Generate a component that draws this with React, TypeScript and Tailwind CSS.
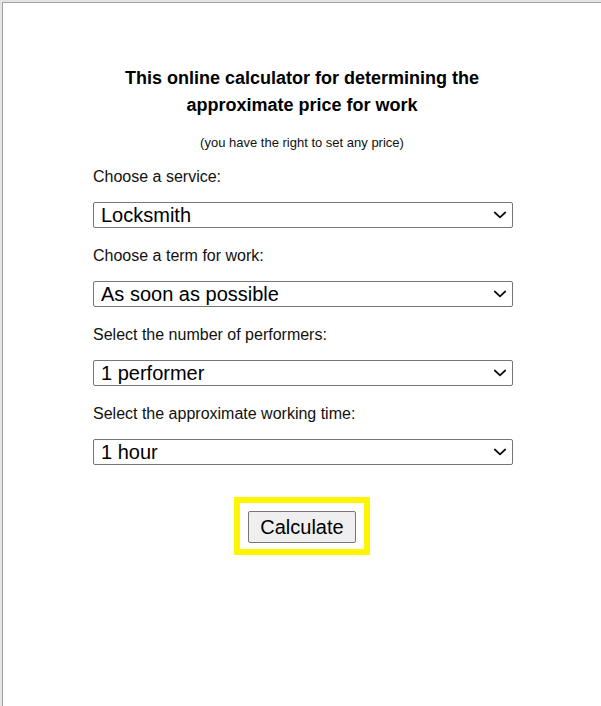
import { useState } from "react";

const fields = [
  {
    label: "Choose a service:",
    options: ["Locksmith", "Electrician", "Plumber", "Carpenter"],
  },
  {
    label: "Choose a term for work:",
    options: ["As soon as possible", "Within a day", "Within a week"],
  },
  {
    label: "Select the number of performers:",
    options: ["1 performer", "2 performers", "3 performers"],
  },
  {
    label: "Select the approximate working time:",
    options: ["1 hour", "2 hours", "4 hours", "8 hours"],
  },
];

const Chevron = () => (
  <svg
    className="pointer-events-none absolute right-[6px] top-1/2 -translate-y-1/2"
    width="14"
    height="8"
    viewBox="0 0 14 8"
    fill="none"
  >
    <path
      d="M1.8 1.5 7 6.3 12.2 1.5"
      stroke="#111"
      strokeWidth="1.8"
      strokeLinecap="round"
      strokeLinejoin="round"
    />
  </svg>
);

const Field = ({ label, options }: { label: string; options: string[] }) => {
  const [value, setValue] = useState(options[0]);

  return (
    <div className="flex flex-col">
      <label className="text-[16px] leading-[18px] text-[#111]">{label}</label>
      <div className="relative mt-[16px] mb-[19px]">
        <select
          value={value}
          onChange={(e) => setValue(e.target.value)}
          className="block h-[26px] w-full appearance-none rounded-[2px] border border-[#767676] bg-white pl-[7px] pt-[1px] text-[20px] leading-[23px] text-black outline-none"
        >
          {options.map((o) => (
            <option key={o}>{o}</option>
          ))}
        </select>
        <Chevron />
      </div>
    </div>
  );
};

export default function App() {
  return (
    <div className="min-h-screen bg-[#e4e4e4] pl-[2px] pt-[2px] font-['Liberation_Sans',Arial,sans-serif]">
      <div className="min-h-[704px] border-l border-t border-[#a3a3a3] bg-white">
        <div className="pt-[62px] text-center">
          <h1 className="text-[18px] font-bold leading-[27px] text-black">
            This online calculator for determining the
            <br />
            approximate price for work
          </h1>
          <p className="mt-[16px] text-[13px] leading-[15px] text-[#111]">
            (you have the right to set any price)
          </p>
        </div>

        <form className="ml-[90px] mt-[18px] w-[420px]">
          {fields.map((f) => (
            <Field key={f.label} label={f.label} options={f.options} />
          ))}
        </form>

        <div className="mt-[13px] flex justify-center">
          <div className="border-[6px] border-[#fff500] px-[8px] pb-[6px] pt-[8px]">
            <button
              type="button"
              className="h-[32px] rounded-[2px] border border-[#767676] bg-[#efefef] px-[11px] text-[20px] leading-[23px] text-black"
            >
              Calculate
            </button>
          </div>
        </div>
      </div>
    </div>
  );
}
